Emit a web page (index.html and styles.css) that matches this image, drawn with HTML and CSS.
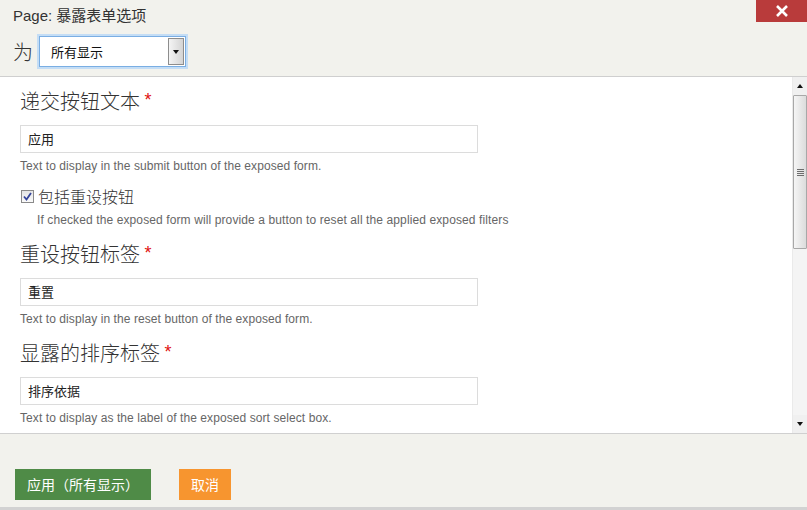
FILE: index.html
```html
<!DOCTYPE html>
<html>
<head>
<meta charset="utf-8">
<link rel="stylesheet" href="styles.css">
</head>
<body>
<div class="dialog">
  <div class="header">
    <div class="title">Page: 暴露表单选项</div>
    <div class="for-row">
      <span class="for-label">为</span>
      <div class="select">
        <span class="select-text">所有显示</span>
        <span class="select-btn"><span class="tri-down"></span></span>
      </div>
    </div>
    <div class="close">
      <svg width="14" height="12" viewBox="0 0 14 12"><path d="M2 1 L12 11 M12 1 L2 11" stroke="#fff" stroke-width="2.6" fill="none"/></svg>
    </div>
  </div>
  <div class="body">
    <div class="content">
      <div class="heading">递交按钮文本 <span class="req">*</span></div>
      <div class="input">应用</div>
      <div class="desc">Text to display in the submit button of the exposed form.</div>
      <div class="check-row">
        <span class="checkbox"><svg width="9" height="9" viewBox="0 0 9 9"><path d="M1 4.5 L3.5 7.5 L8 1" stroke="#34449a" stroke-width="1.8" fill="none"/></svg></span>
        <span class="check-label">包括重设按钮</span>
      </div>
      <div class="desc indent">If checked the exposed form will provide a button to reset all the applied exposed filters</div>
      <div class="heading spaced">重设按钮标签 <span class="req">*</span></div>
      <div class="input">重置</div>
      <div class="desc">Text to display in the reset button of the exposed form.</div>
      <div class="heading spaced">显露的排序标签 <span class="req">*</span></div>
      <div class="input">排序依据</div>
      <div class="desc">Text to display as the label of the exposed sort select box.</div>
    </div>
    <div class="scrollbar">
      <div class="sb-btn"><span class="tri-up"></span></div>
      <div class="sb-thumb"><span class="grip"></span></div>
      <div class="sb-track"></div>
      <div class="sb-btn"><span class="tri-down"></span></div>
    </div>
  </div>
  <div class="footer">
    <span class="btn btn-green">应用（所有显示）</span>
    <span class="btn btn-orange">取消</span>
  </div>
</div>
</body>
</html>
```
FILE: styles.css
```css
html, body {
  margin: 0;
  padding: 0;
  background: #f2f2ed;
}
body {
  font-family: "Liberation Sans", Arial, "Noto Sans CJK SC", sans-serif;
  color: #333;
}
.dialog {
  width: 807px;
  height: 510px;
  display: flex;
  flex-direction: column;
  overflow: hidden;
}
.header {
  position: relative;
  box-sizing: border-box;
  padding: 7px 0 0 13px;
  background: #f2f2ed;
  border-bottom: 1px solid #cfcfcf;
  flex: none;
  height: 77px;
}
.title {
  font-size: 15px;
  line-height: 18px;
  color: #333;
}
.for-row {
  display: flex;
  align-items: center;
  margin-top: 11px;
}
.for-label {
  font-size: 20px;
  line-height: 24px;
  color: #333;
  width: 26px;
  font-family: "Noto Sans CJK SC", sans-serif;
  font-weight: 300;
}
.select {
  width: 147px;
  height: 31px;
  box-sizing: border-box;
  border: 1px solid #7aaee3;
  box-shadow: 0 0 0 2px #c4ddf5;
  background: #fff;
  display: flex;
  align-items: center;
  justify-content: space-between;
  padding: 1px 1px 1px 11px;
}
.select-text {
  font-size: 13px;
  color: #111;
}
.select-btn {
  width: 16px;
  height: 27px;
  box-sizing: border-box;
  border: 1px solid #8d8d8d;
  background: linear-gradient(to right, #f4f4f4, #d4d4d4);
  display: flex;
  align-items: center;
  justify-content: center;
}
.tri-down {
  width: 0;
  height: 0;
  border-left: 3.5px solid transparent;
  border-right: 3.5px solid transparent;
  border-top: 4px solid #111;
}
.tri-up {
  width: 0;
  height: 0;
  border-left: 3.5px solid transparent;
  border-right: 3.5px solid transparent;
  border-bottom: 4px solid #111;
}
.close {
  position: absolute;
  top: 0;
  right: 0;
  width: 51px;
  height: 22px;
  background: #b93b3b;
  display: flex;
  align-items: center;
  justify-content: center;
}
.body {
  display: flex;
  height: 356px;
  background: #fff;
  flex: none;
}
.content {
  flex: 1;
  overflow: hidden;
  padding: 11px 0 0 20px;
}
.heading {
  font-size: 20px;
  line-height: 24px;
  color: #333;
  font-family: "Noto Sans CJK SC", sans-serif;
  font-weight: 300;
}
.heading.spaced {
  margin-top: 13px;
}
.req {
  color: #e01010;
  font-size: 18px;
  font-family: "Liberation Sans", sans-serif;
  vertical-align: 3px;
}
.input {
  width: 458px;
  height: 28px;
  box-sizing: border-box;
  border: 1px solid #dcdcdc;
  margin-top: 12px;
  padding-left: 7px;
  font-size: 13px;
  line-height: 25px;
  color: #222;
  font-family: "Noto Sans CJK SC", sans-serif;
}
.desc {
  font-size: 12px;
  line-height: 16px;
  color: #666;
  margin-top: 5px;
  letter-spacing: 0.08px;
}
.desc.indent {
  margin: 6px 0 0 17px;
  letter-spacing: 0.11px;
}
.check-row {
  display: flex;
  align-items: center;
  margin-top: 12px;
  height: 20px;
}
.checkbox {
  width: 11px;
  height: 11px;
  border: 1px solid #8a8a8a;
  background: linear-gradient(#e4e4e4, #fafafa);
  margin-left: 1px;
  display: flex;
  align-items: center;
  justify-content: center;
  box-sizing: content-box;
}
.check-label {
  font-size: 16px;
  line-height: 20px;
  margin-left: 4px;
  color: #333;
  font-family: "Noto Sans CJK SC", sans-serif;
  font-weight: 300;
}
.scrollbar {
  width: 14px;
  display: flex;
  flex-direction: column;
  background: #f4f4f4;
  border-left: 1px solid #eaeaea;
}
.sb-btn {
  height: 18px;
  display: flex;
  align-items: center;
  justify-content: center;
  background: #f0f0f0;
  flex: none;
}
.sb-thumb {
  height: 154px;
  box-sizing: border-box;
  border: 1px solid #a8a8a8;
  border-radius: 1px;
  background: linear-gradient(to right, #f5f5f5, #dcdcdc);
  display: flex;
  align-items: center;
  justify-content: center;
  flex: none;
}
.grip {
  width: 7px;
  height: 7px;
  background: repeating-linear-gradient(#6d6d6d 0 1px, transparent 1px 2px);
}
.sb-track {
  flex: 1;
}
.footer {
  flex: 1;
  border-top: 1px solid #d0d0d0;
  border-bottom: 3px solid #d2d2d2;
  background: #f2f2ed;
  padding: 35px 0 0 15px;
  display: flex;
  align-items: flex-start;
  gap: 28px;
}
.btn {
  height: 31px;
  line-height: 31px;
  color: #fff;
  font-size: 14px;
  font-family: "Noto Sans CJK SC", sans-serif;
  text-align: center;
  box-sizing: border-box;
}
.btn-green {
  width: 136px;
  background: #4f8b47;
}
.btn-orange {
  width: 52px;
  background: #f7952f;
}
```
